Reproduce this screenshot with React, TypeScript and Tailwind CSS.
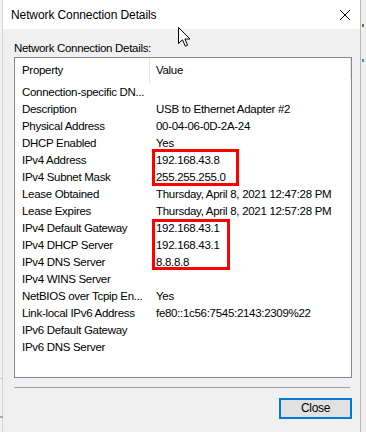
import React from 'react';

const rows: [string, string][] = [
  ['Connection-specific DN...', ''],
  ['Description', 'USB to Ethernet Adapter #2'],
  ['Physical Address', '00-04-06-0D-2A-24'],
  ['DHCP Enabled', 'Yes'],
  ['IPv4 Address', '192.168.43.8'],
  ['IPv4 Subnet Mask', '255.255.255.0'],
  ['Lease Obtained', 'Thursday, April 8, 2021 12:47:28 PM'],
  ['Lease Expires', 'Thursday, April 8, 2021 12:57:28 PM'],
  ['IPv4 Default Gateway', '192.168.43.1'],
  ['IPv4 DHCP Server', '192.168.43.1'],
  ['IPv4 DNS Server', '8.8.8.8'],
  ['IPv4 WINS Server', ''],
  ['NetBIOS over Tcpip En...', 'Yes'],
  ['Link-local IPv6 Address', 'fe80::1c56:7545:2143:2309%22'],
  ['IPv6 Default Gateway', ''],
  ['IPv6 DNS Server', ''],
];

function Cursor() {
  return (
    <svg className="absolute left-[178px] top-[27px]" width="13" height="20" viewBox="0 0 13 20">
      <path
        d="M0.5 0.5 L0.5 16.5 L4.5 12.8 L7.3 19.2 L9.6 18.2 L6.9 12 L12 12 Z"
        fill="#fff"
        stroke="#000"
        strokeWidth="1"
        strokeLinejoin="miter"
      />
    </svg>
  );
}

export default function App() {
  return (
    <div
      className="relative flex h-[432px] w-[366px] overflow-hidden bg-[#f0f0f0] text-[11.5px] tracking-[-0.3px] text-black"
      style={{ fontFamily: '"Liberation Sans", Arial, sans-serif' }}
    >
      {/* window behind, left */}
      <div className="relative w-[3px] shrink-0 border-r border-[#d4d4d4] bg-[#f3f3f3]">
        <div className="absolute left-0 top-[378px] h-px w-[3px] bg-[#c8c8c8]" />
        <div className="absolute left-0 top-[416px] h-[2px] w-[3px] bg-[#a8a8a8]" />
      </div>

      <div className="flex w-[358px] shrink-0 flex-col border-r border-[#b9b9b9]">
        <div className="flex h-[29px] items-center justify-between bg-white pl-[8px] pr-[8px]">
          <span className="text-[12px] tracking-[-0.1px]">Network Connection Details</span>
          <svg width="12" height="12" viewBox="0 0 12 12" className="mr-[1px]">
            <path d="M1 1 L11 11 M11 1 L1 11" stroke="#000" strokeWidth="1" />
          </svg>
        </div>

        <div className="flex flex-1 flex-col pl-[11px] pr-[6px]">
          <div className="mt-[10px] h-[18px] leading-[18px]">Network Connection Details:</div>

          <div className="relative h-[321px] w-[338px] border border-[#828790] bg-white">
            <div className="grid h-[26px] grid-cols-[134px_1fr]">
              <div className="pl-[7px] pt-[4px] leading-[17px]">Property</div>
              <div className="flex h-[25px] border-l border-[#e5e5e5] pl-[6px] pt-[4px] leading-[17px]">
                <span>Value</span>
                <div className="ml-auto h-[21px] -mt-[4px] border-r border-[#e5e5e5]" />
              </div>
            </div>
            {rows.map(([k, v], i) => (
              <div key={i} className="grid h-[17px] grid-cols-[134px_1fr] items-center leading-[17px]">
                <div className="overflow-hidden whitespace-nowrap pl-[7px]">{k}</div>
                <div className="overflow-hidden whitespace-nowrap pl-[7px]">{v}</div>
              </div>
            ))}

            <div className="absolute left-[137px] top-[91px] h-[37px] w-[87px] border-[3px] border-[#ff0000]" />
            <div className="absolute left-[137px] top-[161px] h-[51px] w-[78px] border-[3px] border-[#ff0000]" />
          </div>

          <div className="mt-[9px] h-px w-[336px] bg-[#a0a0a0]" />

          <div className="mt-[10px] flex w-[338px] justify-end">
            <button
              type="button"
              className="h-[21px] w-[73px] border-2 border-[#0078d7] bg-[#e1e1e1] text-[12px] leading-[17px]"
            >
              Close
            </button>
          </div>
        </div>
      </div>

      {/* window behind, right */}
      <div className="relative flex-1 bg-[#f0f0f0]">
        <div className="absolute left-[1px] top-[24px] h-[3px] w-[2px] bg-[#8a6a3a]" />
        <div className="absolute left-[1px] top-[59px] h-[3px] w-[2px] bg-[#3a8ad0]" />
      </div>

      <Cursor />
    </div>
  );
}
